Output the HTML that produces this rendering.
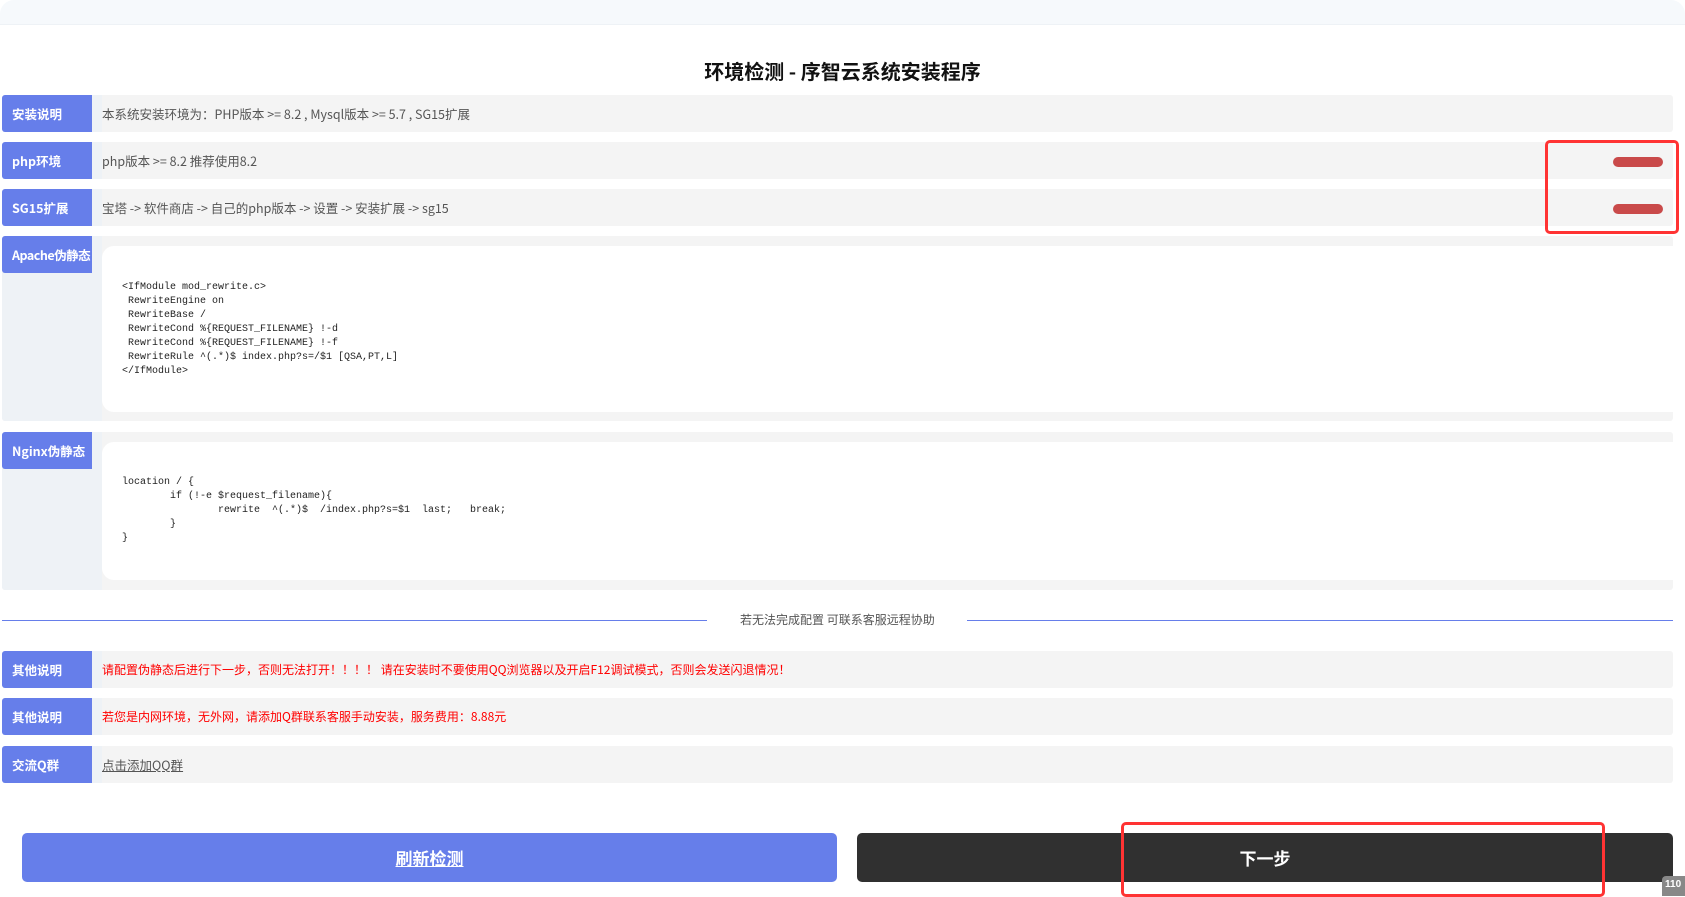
<!DOCTYPE html>
<html><head><meta charset="utf-8"><style>
*{margin:0;padding:0;box-sizing:border-box}
body{width:1685px;height:896px;background:#fff;position:relative;overflow:hidden;font-family:"Noto Sans CJK SC","Liberation Sans",sans-serif;font-size:12.5px;color:#555}
.top{position:absolute;left:0;top:0;width:1685px;height:25px;background:#f6f9fc;border-radius:14px 14px 0 0;border-bottom:1px solid #eef2f6}
.title{position:absolute;left:0;width:1685px;top:56px;text-align:center;font-size:20px;font-weight:bold;color:#111}
.row{position:absolute;left:2px;width:1671px;background:#f4f4f4;border-radius:3px}
.lab{position:absolute;left:0;top:0;width:90px;height:37px;background:#667eea;color:#fff;font-weight:bold;font-size:12.5px;line-height:37px;padding-left:10px;border-radius:3px 0 0 3px;white-space:nowrap;overflow:hidden}
.strip{position:absolute;left:90px;top:0;bottom:0;width:10px;background:#eef2f6}
.txt{position:absolute;left:100px;top:0;line-height:37px;color:#555;white-space:nowrap}
.red{color:#f00}
.tall .labbg{position:absolute;left:0;top:0;bottom:0;width:100px;background:#eef2f6;border-radius:3px 0 0 3px}
.code{position:absolute;left:100px;background:#fff;border-radius:12px 0 0 12px;right:0;font-family:"Liberation Serif","Liberation Mono",monospace;font-size:10.5px;line-height:14px;color:#222;white-space:pre;padding-left:20px}
.pill{position:absolute;left:1613px;width:50px;height:10px;border-radius:5px;background:#c94a4a}
.box{position:absolute;border:3px solid #f33;border-radius:5px}
.btn{position:absolute;top:833px;height:49px;border-radius:5px;color:#fff;font-weight:bold;font-size:17px;text-align:center;line-height:49px}
</style></head><body>
<div class="top"></div>
<div class="title">环境检测 - 序智云系统安装程序</div>

<div class="row" style="top:95px;height:37px"><div class="lab">安装说明</div><div class="strip"></div><div class="txt">本系统安装环境为：PHP版本 &gt;= 8.2 , Mysql版本 &gt;= 5.7 , SG15扩展</div></div>
<div class="row" style="top:142px;height:37px"><div class="lab">php环境</div><div class="strip"></div><div class="txt">php版本 &gt;= 8.2 推荐使用8.2</div></div>
<div class="row" style="top:189px;height:37px"><div class="lab">SG15扩展</div><div class="strip"></div><div class="txt">宝塔 -&gt; 软件商店 -&gt; 自己的php版本 -&gt; 设置 -&gt; 安装扩展 -&gt; sg15</div></div>

<div class="row tall" style="top:236px;height:185px"><div class="labbg"></div><div class="lab" style="letter-spacing:-0.5px">Apache伪静态</div>
<div class="code" style="top:10px;height:166px;padding-top:35px;font-family:'Liberation Mono',monospace;font-size:10px">&lt;IfModule mod_rewrite.c&gt;
 RewriteEngine on
 RewriteBase /
 RewriteCond %{REQUEST_FILENAME} !-d
 RewriteCond %{REQUEST_FILENAME} !-f
 RewriteRule ^(.*)$ index.php?s=/$1 [QSA,PT,L]
&lt;/IfModule&gt;</div></div>

<div class="row tall" style="top:432px;height:158px"><div class="labbg"></div><div class="lab">Nginx伪静态</div>
<div class="code" style="top:10px;height:138px;padding-top:34px;font-family:'Liberation Mono',monospace;font-size:10px">location / {
        if (!-e $request_filename){
                rewrite  ^(.*)$  /index.php?s=$1  last;   break;
        }
}</div></div>

<div style="position:absolute;left:2px;top:620px;width:705px;height:1px;background:#667eea"></div>
<div style="position:absolute;left:967px;top:620px;width:706px;height:1px;background:#667eea"></div>
<div style="position:absolute;left:740px;top:611px;font-size:12px;color:#555">若无法完成配置 可联系客服远程协助</div>

<div class="row" style="top:651px;height:37px"><div class="lab">其他说明</div><div class="strip"></div><div class="txt red" style="font-size:12px">请配置伪静态后进行下一步，否则无法打开！！！！ 请在安装时不要使用QQ浏览器以及开启F12调试模式，否则会发送闪退情况！</div></div>
<div class="row" style="top:698px;height:37px"><div class="lab">其他说明</div><div class="strip"></div><div class="txt red" style="font-size:12px">若您是内网环境，无外网，请添加Q群联系客服手动安装，服务费用：8.88元</div></div>
<div class="row" style="top:746px;height:37px"><div class="lab">交流Q群</div><div class="strip"></div><div class="txt" style="text-decoration:underline">点击添加QQ群</div></div>

<div class="pill" style="top:157px"></div>
<div class="pill" style="top:204px"></div>
<div class="box" style="left:1545px;top:140px;width:134px;height:94px"></div>

<div class="btn" style="left:22px;width:815px;background:#667eea;text-decoration:underline">刷新检测</div>
<div class="btn" style="left:857px;width:816px;background:#303030">下一步</div>
<div class="box" style="left:1121px;top:822px;width:484px;height:75px"></div>
<div style="position:absolute;left:1662px;top:876px;width:24px;height:20px;background:#888;border-radius:4px 0 0 0;color:#fff;font-size:10px;font-weight:bold;padding:3px 0 0 3px;font-family:'Liberation Sans',sans-serif">110</div>
</body></html>
